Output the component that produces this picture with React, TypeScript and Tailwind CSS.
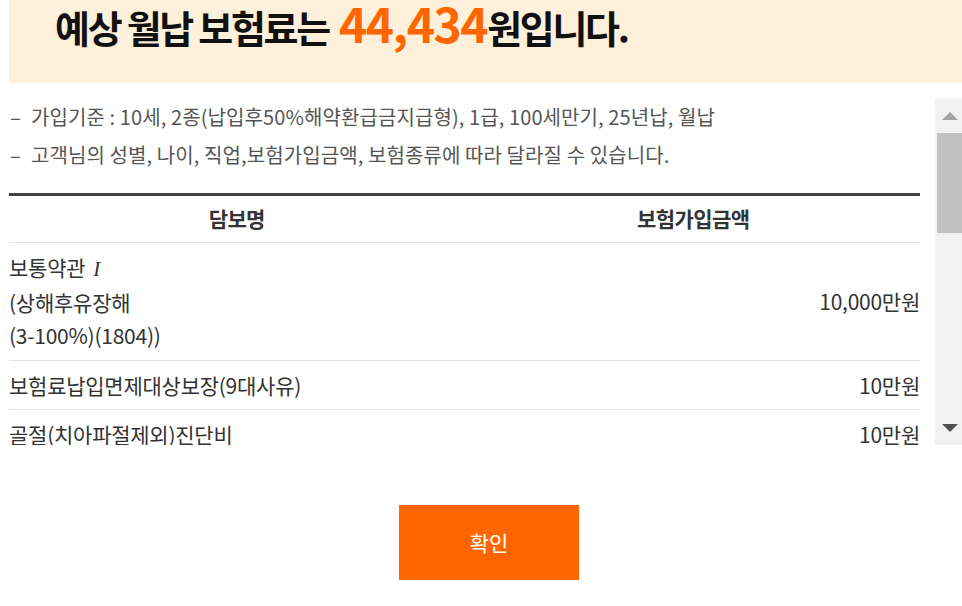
import { useState } from "react";

const rows = [
  { name: ["보통약관", "(상해후유장해", "(3-100%)(1804))"], amount: "10,000만원", roman: true },
  { name: ["보험료납입면제대상보장(9대사유)"], amount: "10만원" },
  { name: ["골절(치아파절제외)진단비"], amount: "10만원" },
  { name: ["화상진단비"], amount: "10만원" },
];

const font = { fontFamily: '"Noto Sans CJK KR", "Noto Sans", sans-serif' };

const App = () => {
  const [open] = useState(true);
  if (!open) return null;

  return (
    <div className="w-[962px] bg-white text-[#333]" style={font}>
      {/* Result banner */}
      <div className="ml-[9px] h-[83px] bg-[#fef0da] pl-[46px] pt-[2px]">
        <h2 className="flex items-baseline font-bold text-[#111] leading-[40px]">
          <span className="text-[38px] tracking-[-2.3px]">예상 월납 보험료는</span>
          <span className="ml-[10px] text-[48px] text-[#ff6600] tracking-[-1.5px]">44,434</span>
          <span className="text-[38px] tracking-[-2.3px]">원입니다.</span>
        </h2>
      </div>

      {/* Scroll box */}
      <div className="mt-[15px] ml-[9px] flex h-[347px]">
        <div className="w-[911px] overflow-hidden">
          <ul className="text-[20px] leading-[38px] text-[#555] tracking-[0.1px]">
            <li className="flex">
              <span className="w-[22px] pl-[1px]">–</span>
              가입기준 : 10세, 2종(납입후50%해약환급금지급형), 1급, 100세만기, 25년납, 월납
            </li>
            <li className="flex">
              <span className="w-[22px] pl-[1px]">–</span>
              고객님의 성별, 나이, 직업,보험가입금액, 보험종류에 따라 달라질 수 있습니다.
            </li>
          </ul>

          <table className="mt-[19px] w-full border-t-[3px] border-[#444] text-[21px] tracking-[-0.25px]">
            <thead>
              <tr className="h-[48px] border-b border-[#e5e5e5] text-[21px] tracking-[-0.6px]">
                <th className="w-1/2 font-bold text-[#333]">담보명</th>
                <th className="w-1/2 pl-[2px] font-bold text-[#333]">보험가입금액</th>
              </tr>
            </thead>
            <tbody>
              {rows.map((r, i) => (
                <tr key={i} className="border-b border-[#e5e5e5]">
                  <td className={`${r.name.length > 1 ? "py-[8px]" : "py-[7.5px]"} leading-[33px] text-left align-middle`}>
                    {r.name.map((l, j) => (
                      <div key={j}>
                        {l}
                        {j === 0 && r.roman && (
                          <span className="ml-[8px] italic" style={{ fontFamily: '"Liberation Serif", serif' }}>
                            I
                          </span>
                        )}
                      </div>
                    ))}
                  </td>
                  <td className="py-[7.5px] leading-[33px] text-right align-middle">{r.amount}</td>
                </tr>
              ))}
            </tbody>
          </table>
        </div>

        {/* Scrollbar */}
        <div className="ml-[15px] flex w-[27px] flex-col bg-[#f1f1f1]">
          <div className="flex h-[35px] items-center justify-center pl-[2px]">
            <div className="h-0 w-0 border-x-[8px] border-b-[8px] border-x-transparent border-b-[#a3a3a3]" />
          </div>
          <div className="ml-[2px] h-[100px] bg-[#c1c1c1]" />
          <div className="flex-1" />
          <div className="flex h-[35px] items-center justify-center pl-[2px]">
            <div className="h-0 w-0 border-x-[8px] border-t-[8px] border-x-transparent border-t-[#505050]" />
          </div>
        </div>
      </div>

      {/* Confirm */}
      <div className="mt-[60px] flex justify-center pl-[16px]">
        <button className="h-[75px] w-[180px] bg-[#ff6600] text-[21px] text-white">확인</button>
      </div>
    </div>
  );
};

export default App;
